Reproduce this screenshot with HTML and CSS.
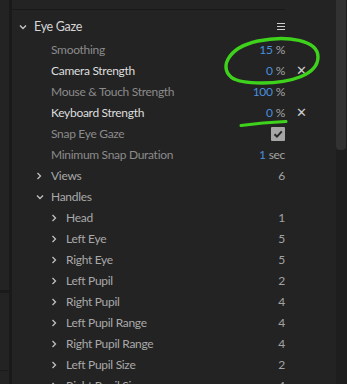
FILE: index.html
```html
<!DOCTYPE html>
<html lang="en">
<head>
    <meta charset="UTF-8">
    <title>Eye Gaze</title>
    <link rel="stylesheet" href="styles.css">
</head>
<body>
<div class="app">
    <div class="side">
        <div class="side-cut"></div>
        <div class="side-line"></div>
    </div>
    <div class="panel">
        <div class="topline"></div>
        <div class="rows">
            <div class="row head-row">
                <svg class="chev down" width="8" height="6" viewBox="0 0 8 6"><path d="M1 1.5 L4 4.5 L7 1.5" fill="none" stroke="#c8c8c8" stroke-width="1.3"/></svg>
                <span class="title">Eye Gaze</span>
                <span class="menu"><i></i><i></i><i></i></span>
                <span class="act"></span>
            </div>
            <div class="row l1"><span class="label dim">Smoothing</span><span class="val"><b>15</b> %</span><span class="act"></span></div>
            <div class="row l1"><span class="label hi">Camera Strength</span><span class="val"><b>0</b> %</span><span class="act"><span class="x">&#x2715;</span></span></div>
            <div class="row l1"><span class="label dim">Mouse &amp; Touch Strength</span><span class="val"><b>100</b> %</span><span class="act"></span></div>
            <div class="row l1"><span class="label hi">Keyboard Strength</span><span class="val"><b>0</b> %</span><span class="act"><span class="x">&#x2715;</span></span></div>
            <div class="row l1"><span class="label dim">Snap Eye Gaze</span><span class="val"><span class="check"><svg width="14" height="14" viewBox="0 0 14 14"><path d="M3.5 7.2 L6 9.6 L10.8 4.4" fill="none" stroke="#262626" stroke-width="2"/></svg></span></span><span class="act"></span></div>
            <div class="row l1"><span class="label dim">Minimum Snap Duration</span><span class="val"><b>1</b> sec</span><span class="act"></span></div>
            <div class="row l1 tw"><svg class="chev" width="6" height="8" viewBox="0 0 6 8"><path d="M1.5 1 L4.5 4 L1.5 7" fill="none" stroke="#c0c0c0" stroke-width="1.3"/></svg><span class="label">Views</span><span class="val num">6</span><span class="act"></span></div>
            <div class="row l1 tw"><svg class="chev dn" width="8" height="6" viewBox="0 0 8 6"><path d="M1 1.5 L4 4.5 L7 1.5" fill="none" stroke="#c0c0c0" stroke-width="1.3"/></svg><span class="label">Handles</span><span class="act"></span></div>
            <div class="row l2"><svg class="chev" width="6" height="8" viewBox="0 0 6 8"><path d="M1.5 1 L4.5 4 L1.5 7" fill="none" stroke="#c0c0c0" stroke-width="1.3"/></svg><span class="label">Head</span><span class="val num">1</span><span class="act"></span></div>
            <div class="row l2"><svg class="chev" width="6" height="8" viewBox="0 0 6 8"><path d="M1.5 1 L4.5 4 L1.5 7" fill="none" stroke="#c0c0c0" stroke-width="1.3"/></svg><span class="label">Left Eye</span><span class="val num">5</span><span class="act"></span></div>
            <div class="row l2"><svg class="chev" width="6" height="8" viewBox="0 0 6 8"><path d="M1.5 1 L4.5 4 L1.5 7" fill="none" stroke="#c0c0c0" stroke-width="1.3"/></svg><span class="label">Right Eye</span><span class="val num">5</span><span class="act"></span></div>
            <div class="row l2"><svg class="chev" width="6" height="8" viewBox="0 0 6 8"><path d="M1.5 1 L4.5 4 L1.5 7" fill="none" stroke="#c0c0c0" stroke-width="1.3"/></svg><span class="label">Left Pupil</span><span class="val num">2</span><span class="act"></span></div>
            <div class="row l2"><svg class="chev" width="6" height="8" viewBox="0 0 6 8"><path d="M1.5 1 L4.5 4 L1.5 7" fill="none" stroke="#c0c0c0" stroke-width="1.3"/></svg><span class="label">Right Pupil</span><span class="val num">4</span><span class="act"></span></div>
            <div class="row l2"><svg class="chev" width="6" height="8" viewBox="0 0 6 8"><path d="M1.5 1 L4.5 4 L1.5 7" fill="none" stroke="#c0c0c0" stroke-width="1.3"/></svg><span class="label">Left Pupil Range</span><span class="val num">4</span><span class="act"></span></div>
            <div class="row l2"><svg class="chev" width="6" height="8" viewBox="0 0 6 8"><path d="M1.5 1 L4.5 4 L1.5 7" fill="none" stroke="#c0c0c0" stroke-width="1.3"/></svg><span class="label">Right Pupil Range</span><span class="val num">4</span><span class="act"></span></div>
            <div class="row l2"><svg class="chev" width="6" height="8" viewBox="0 0 6 8"><path d="M1.5 1 L4.5 4 L1.5 7" fill="none" stroke="#c0c0c0" stroke-width="1.3"/></svg><span class="label">Left Pupil Size</span><span class="val num">2</span><span class="act"></span></div>
            <div class="row l2"><svg class="chev" width="6" height="8" viewBox="0 0 6 8"><path d="M1.5 1 L4.5 4 L1.5 7" fill="none" stroke="#c0c0c0" stroke-width="1.3"/></svg><span class="label">Right Pupil Size</span><span class="val num">4</span><span class="act"></span></div>
        </div>
    </div>
    <div class="scroll"><div class="thumb"></div></div>

    <!-- hand-drawn marks over the screenshot -->
    <svg class="marks" width="347" height="384" viewBox="0 0 347 384">
        <path d="M234 79 C 218 70, 226 48, 258 41 C 287 35, 318 40, 318 57 C 318 75, 290 83, 262 83 C 248 83, 236 81, 231 77" fill="none" stroke="#3fd21c" stroke-width="3.4" stroke-linecap="round"/>
        <path d="M241 125.5 C 258 123, 272 122, 286 121.5" fill="none" stroke="#3fd21c" stroke-width="3" stroke-linecap="round"/>
    </svg>
</div>
</body>
</html>
```
FILE: styles.css
```css
body {
    margin: 0;
    background: #232323;
    font-family: Lato, "Open Sans", sans-serif;
    font-size: 12px;
    letter-spacing: -0.3px;
    overflow: hidden;
}
.app {
    position: relative;
    display: flex;
    width: 347px;
    height: 384px;
    overflow: hidden;
}
.side {
    width: 9px;
    border-right: 3px solid #1a1a1a;
    background: #232323;
    flex-shrink: 0;
}
.side-cut {
    height: 3px;
    margin-top: 290px;
    background: #1a1a1a;
}
.side-line {
    height: 1px;
    width: 8px;
    margin-top: 77px;
    background: #1a1a1a;
}
.panel {
    flex: 1;
    min-width: 0;
}
.topline {
    margin-top: 9px;
    width: 273px;
    height: 1px;
    background: #191919;
}
.rows {
    padding-top: 6px;
}
.row {
    display: flex;
    align-items: center;
    height: 21px;
    color: #a9a9a9;
    white-space: nowrap;
}
.head-row {
    margin-bottom: 2px;
    padding-left: 7px;
}
.chev {
    flex-shrink: 0;
}
.head-row .chev {
    margin-right: 7px;
}
.title {
    color: #d6d6d6;
    font-size: 12.5px;
}
.menu {
    margin-left: auto;
    display: flex;
    flex-direction: column;
    gap: 2px;
    width: 8px;
}
.menu i {
    display: block;
    height: 1px;
    background: #cfcfcf;
}
.l1 {
    padding-left: 39px;
}
.l1.tw {
    padding-left: 24px;
}
.l1.tw .chev {
    margin-right: 9px;
}
.l1.tw .chev.dn {
    margin-right: 7px;
}
.l2 {
    padding-left: 39px;
}
.l2 .chev {
    margin-right: 9px;
}
.label {
    color: #a9a9a9;
}
.label.dim {
    color: #8b8b8b;
}
.label.hi {
    color: #dedede;
}
.val {
    margin-left: auto;
    color: #a3a3a3;
    display: flex;
    align-items: center;
}
.val b {
    font-weight: normal;
    color: #4a8fdc;
    margin-right: 3px;
}
.num {
    color: #a3a3a3;
}
.act {
    width: 51px;
    flex-shrink: 0;
    padding-left: 11px;
    box-sizing: border-box;
}
.x {
    color: #cdcdcd;
    font-family: "DejaVu Sans", sans-serif;
    font-size: 13px;
    font-weight: bold;
}
.check {
    display: block;
    width: 14px;
    height: 14px;
    background: #a6a6a6;
    border-radius: 1px;
}
.check svg {
    display: block;
}
.scroll {
    width: 11px;
    flex-shrink: 0;
    background: #1e1e1e;
}
.thumb {
    width: 10px;
    height: 150px;
    background: #323232;
    border-radius: 0 0 4px 4px;
}
.marks {
    position: absolute;
    left: 0;
    top: 0;
    pointer-events: none;
}
```
